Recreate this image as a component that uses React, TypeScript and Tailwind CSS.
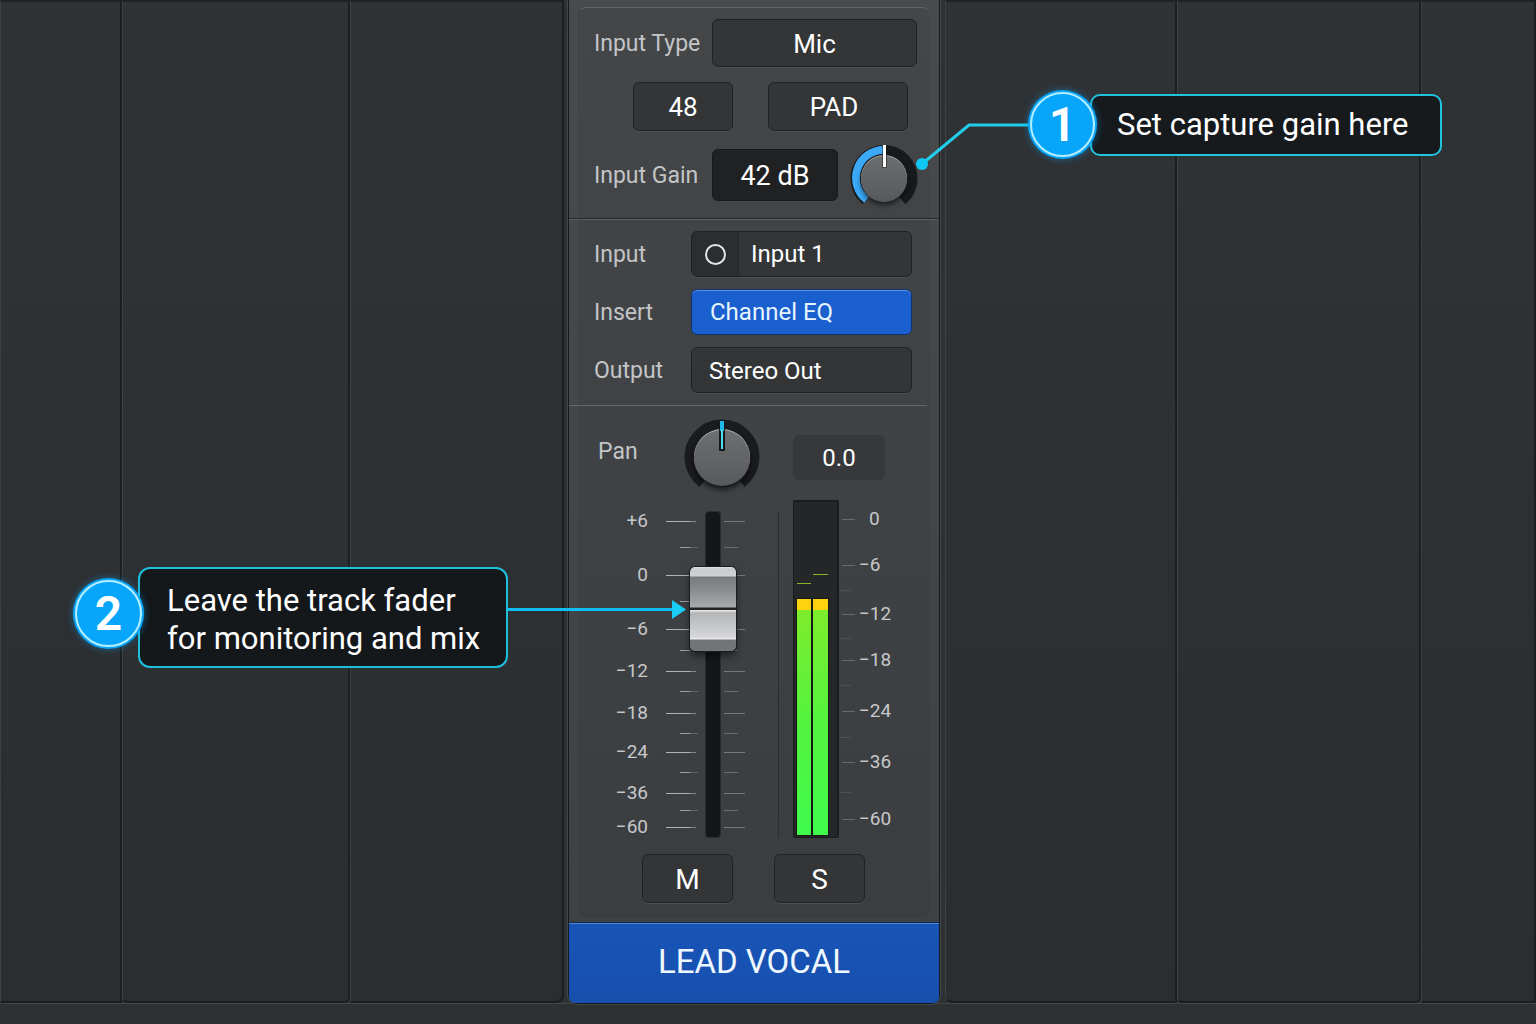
import { useState } from 'react'
import type { ReactNode } from 'react'

const FADER_MARKS = [
  { label: '+6', y: 21 },
  { label: '0', y: 75 },
  { label: '−6', y: 129 },
  { label: '−12', y: 171 },
  { label: '−18', y: 213 },
  { label: '−24', y: 252 },
  { label: '−36', y: 293 },
  { label: '−60', y: 327 },
]
const FADER_MINOR = [47, 101, 150, 191, 233, 272, 310]

const METER_MARKS = [
  { label: '0', y: 19 },
  { label: '−6', y: 65 },
  { label: '−12', y: 114 },
  { label: '−18', y: 160 },
  { label: '−24', y: 211 },
  { label: '−36', y: 262 },
  { label: '−60', y: 319 },
]
const METER_MINOR = [90, 138, 185, 237, 292]

const field =
  'rounded-md border border-[#1f2123] bg-[#333537] text-white shadow-[0_1px_0_#4d5053] outline-none'
const rowLabel = 'pt-0.5 text-[23px] leading-7 text-[#c3c5c7]'

function Knob({ label, size, children }: { label: string; size: string; children: ReactNode }) {
  return (
    <label className={`relative block shrink-0 ${size}`}>
      {children}
      <input
        type="range"
        aria-label={label}
        min={-64}
        max={64}
        defaultValue={0}
        className="absolute inset-0 size-full cursor-pointer opacity-0"
      />
    </label>
  )
}

function GainKnob() {
  return (
    <Knob label="Input gain" size="size-[68px]">
      <svg viewBox="0 0 68 68" className="size-full overflow-visible">
        <defs>
          <linearGradient id="gain-cap" x1="0" y1="0" x2="0" y2="1">
            <stop offset="0" stopColor="#6c6d6f" />
            <stop offset="1" stopColor="#58595b" />
          </linearGradient>
          <filter id="soft" x="-50%" y="-50%" width="200%" height="200%">
            <feGaussianBlur stdDeviation="2.5" />
          </filter>
        </defs>
        <path d="M15.8 56.4 A28.500 28.500 0 1 1 52.2 56.4" fill="none" stroke="#17191b" strokeWidth="10" />
        <path d="M16.6 55.6 A27.800 27.800 0 0 1 34 6" fill="none" stroke="#3ba9f8" strokeWidth="8" />
        <circle cx="34" cy="38" r="23" fill="#000" opacity="0.6" filter="url(#soft)" />
        <circle cx="34" cy="34" r="24" fill="#1b1c1e" />
        <circle cx="34" cy="34" r="23" fill="#a5a6a8" />
        <circle cx="34" cy="35" r="23" fill="url(#gain-cap)" />
        <rect x="32" y="1" width="5" height="23" fill="#1b1c1e" opacity="0.5" />
        <rect x="33" y="1" width="3" height="22" fill="#fff" />
      </svg>
    </Knob>
  )
}

function PanKnob() {
  return (
    <Knob label="Pan" size="size-[74px]">
      <svg viewBox="0 0 74 74" className="size-full overflow-visible">
        <defs>
          <linearGradient id="pan-cap" x1="0" y1="0" x2="0" y2="1">
            <stop offset="0" stopColor="#6e6f71" />
            <stop offset="1" stopColor="#58595b" />
          </linearGradient>
        </defs>
        <path d="M17.5 63 A32.500 32.500 0 1 1 56.5 63" fill="none" stroke="#1a1b1d" strokeWidth="10" />
        <circle cx="37" cy="42" r="28" fill="#000" opacity="0.6" filter="url(#soft)" />
        <circle cx="37" cy="38" r="29" fill="#1a1b1d" />
        <circle cx="37" cy="37" r="28" fill="#b0b1b3" />
        <circle cx="37" cy="38" r="28" fill="url(#pan-cap)" />
        <rect x="34" y="0" width="6" height="31" fill="#15181a" />
        <rect x="35" y="1" width="4" height="10" fill="#1fb9ea" />
        <rect x="36" y="10" width="2" height="19" fill="#4fdcf5" />
      </svg>
    </Knob>
  )
}

/* Every label has zero height, so its centre lies on the mark itself. */
function ScaleLabels({ marks, className }: { marks: { label: string; y: number }[]; className: string }) {
  return (
    <ul className={`flex flex-col text-[19px] text-[#c6c8ca] ${className}`}>
      {marks.map((m, i) => (
        <li
          key={m.label}
          className="flex h-0 items-center justify-end"
          style={{ marginTop: m.y - (i ? marks[i - 1].y : 0) }}
        >
          {m.label}
        </li>
      ))}
    </ul>
  )
}

function Fader() {
  const [level, setLevel] = useState(77)
  return (
    <div className="relative flex w-20 justify-center pt-[11px]">
      <svg viewBox="0 0 80 338" className="absolute inset-0 h-[338px] w-20">
        {FADER_MARKS.map((m) => (
          <g key={m.label}>
            <rect x="0" y={m.y} width="24" height="1" fill="#b0b2b4" />
            <rect x="24" y={m.y} width="6" height="1" fill="#85878a" />
            <rect x="58" y={m.y} width="21" height="1" fill="#75777a" />
          </g>
        ))}
        {FADER_MINOR.map((y) => (
          <g key={y}>
            <rect x="14" y={y} width="10" height="1" fill="#9b9da0" />
            <rect x="24" y={y} width="8" height="1" fill="#63666a" />
            <rect x="58" y={y} width="14" height="1" fill="#6b6e71" />
          </g>
        ))}
      </svg>
      <input
        type="range"
        aria-label="Track fader"
        min={0}
        max={100}
        value={level}
        onChange={(e) => setLevel(Number(e.target.value))}
        className="relative mr-[-13px] h-[327px] w-4 cursor-pointer appearance-none rounded-sm border border-[#2a2c2e] bg-[#151617] [direction:rtl] [writing-mode:vertical-lr] [&::-webkit-slider-thumb]:h-[84px] [&::-webkit-slider-thumb]:w-[46px] [&::-webkit-slider-thumb]:appearance-none [&::-webkit-slider-thumb]:rounded-[5px] [&::-webkit-slider-thumb]:bg-[linear-gradient(#e2e3e4_0,#cbccce_2px,#d0d1d2_9px,#77797a_10px,#8c8d8f_24px,#a9aaab_40px,#222324_41px,#222324_43px,#eeeeef_43px,#b4b5b7_46px,#d6d7d9_70px,#eeeeef_72px,#737476_73px,#737476_84px)] [&::-webkit-slider-thumb]:shadow-[0_0_0_1px_#1b1c1e,0_5px_8px_rgba(0,0,0,0.55)]"
      />
    </div>
  )
}

function Meter() {
  return (
    <svg viewBox="0 0 62 338" className="h-[338px] w-[62px]">
      <defs>
        <linearGradient id="level" x1="0" y1="0" x2="0" y2="1">
          <stop offset="0" stopColor="#7dec2c" />
          <stop offset="0.5" stopColor="#54f33f" />
          <stop offset="1" stopColor="#40fb4c" />
        </linearGradient>
      </defs>
      <rect width="46" height="338" rx="2" fill="#191b1c" />
      <rect x="1" y="2" width="43" height="335" fill="#242627" />
      <rect x="3" y="98" width="33" height="238" fill="#151a14" />
      <rect x="4" y="83" width="14" height="1" fill="#86b52c" />
      <rect x="20" y="74" width="15" height="1" fill="#86b52c" />
      {[4, 20].map((x) => (
        <g key={x}>
          <rect x={x} y="99" width={x === 4 ? 14 : 15} height="11" fill="#fdd20e" />
          <rect x={x} y="110" width={x === 4 ? 14 : 15} height="225" fill="url(#level)" />
        </g>
      ))}
      {METER_MARKS.map((m) => (
        <rect key={m.label} x="49" y={m.y} width="13" height="1" fill="#686b6e" />
      ))}
      {METER_MINOR.map((y) => (
        <rect key={y} x="48" y={y} width="10" height="1" fill="#505356" />
      ))}
    </svg>
  )
}

function Badge({ children, className }: { children: ReactNode; className: string }) {
  return (
    <span
      className={`absolute flex items-center justify-center rounded-full border-2 border-[#b5efff] bg-[#08a6fb] font-semibold text-white shadow-[0_0_0_2px_#08a6fb,0_0_7px_2px_rgba(8,166,251,0.5)] ${className}`}
    >
      {children}
    </span>
  )
}

function ChannelStrip() {
  return (
    <section className="relative z-10 mr-[6px] ml-[5px] flex flex-col self-start rounded-b-lg bg-linear-to-b from-[#484a4c] to-[#3e4144] shadow-[0_0_0_1px_#15191c,0_0_0_2px_#43474a]">
      <div className="pointer-events-none absolute inset-x-[9px] top-[7px] bottom-[85px] rounded-lg border-t border-l border-t-[#626466] border-l-[#404244] bg-black/5" />

      <div className="relative border-b border-[#25282b] pt-[19px] pr-[22px] pb-[17px] pl-[25px]">
        <div className="flex items-center">
          <label htmlFor="input-type" className={`w-[118px] shrink-0 ${rowLabel}`}>
            Input Type
          </label>
          <select
            id="input-type"
            className={`h-12 flex-1 appearance-none pt-0.5 text-center text-[26px] [text-align-last:center] ${field}`}
          >
            <option>Mic</option>
            <option>Line</option>
          </select>
        </div>
        <div className="mt-[15px] flex justify-between pr-[9px] pl-[39px]">
          <button className={`h-[49px] w-[100px] pt-0.5 text-[26px] ${field}`}>48</button>
          <button className={`h-[49px] w-[140px] pt-0.5 pr-2 text-[26px] ${field}`}>PAD</button>
        </div>
        <div className="mt-[18px] flex items-center">
          <label htmlFor="input-gain" className={`w-[118px] shrink-0 ${rowLabel}`}>
            Input Gain
          </label>
          <input
            id="input-gain"
            defaultValue="42 dB"
            className="h-[52px] w-[126px] shrink-0 rounded-md border border-[#17191b] bg-[#1f2123] pt-0.5 text-center text-[27px] text-white outline-none"
          />
          <div className="-mt-[5px] -mb-[11px] ml-3">
            <GainKnob />
          </div>
        </div>
      </div>

      <div className="relative grid grid-cols-[97px_1fr] items-center gap-y-3 border-t border-[#5d6063] pt-[11px] pr-[27px] pb-3 pl-[25px]">
        <label htmlFor="input" className={rowLabel}>
          Input
        </label>
        <div className={`flex h-[46px] overflow-hidden ${field}`}>
          <button
            aria-label="Mono or stereo"
            className="flex w-[47px] items-center justify-center border-r border-[#242628] bg-[#2b2d2f]"
          >
            <span className="size-[21px] rounded-full border-2 border-[#e4e5e6]" />
          </button>
          <select id="input" className="flex-1 appearance-none pl-3 text-2xl outline-none">
            <option>Input 1</option>
            <option>Input 2</option>
          </select>
        </div>
        <span className={rowLabel}>Insert</span>
        <button className="h-[46px] rounded-md border border-[#12326c] bg-[#1a5fce] pl-[18px] text-left text-2xl text-[#e6f4ff] shadow-[inset_0_1px_0_#5b93e6]">
          Channel EQ
        </button>
        <label htmlFor="output" className={rowLabel}>
          Output
        </label>
        <select id="output" className={`h-[46px] appearance-none pt-0.5 pl-[17px] text-2xl ${field}`}>
          <option>Stereo Out</option>
          <option>Bus 1</option>
        </select>
      </div>

      <div className="relative pb-5">
        <div className="mr-3 h-px bg-[#63666a]" />
        <div className="mt-[14px] flex h-[74px] items-center pl-[29px]">
          <label htmlFor="pan" className={`w-[87px] pb-3 ${rowLabel}`}>
            Pan
          </label>
          <PanKnob />
          <input
            id="pan"
            defaultValue="0.0"
            className="ml-[34px] h-[45px] w-[92px] rounded-md bg-[#36383b] pt-0.5 text-center text-2xl text-white outline-none"
          />
        </div>

        <div className="mt-[6px] flex h-[338px] pl-[39px]">
          <ScaleLabels marks={FADER_MARKS} className="mr-[18px] w-10" />
          <Fader />
          <div className="mt-[11px] mr-[14px] ml-8 w-px bg-[#2a2d30]" />
          <Meter />
          <ScaleLabels
            marks={METER_MARKS}
            className="ml-1 w-[34px] [&>li]:justify-start [&>li:first-child]:pl-[10px]"
          />
        </div>

        <div className="mt-4 flex gap-[41px] pl-[73px]">
          <button className={`h-[49px] w-[91px] pt-0.5 text-[28px] ${field}`}>M</button>
          <button className={`h-[49px] w-[91px] pt-0.5 text-[28px] ${field}`}>S</button>
        </div>
      </div>

      <h1 className="relative flex h-20 items-center justify-center rounded-b-md border-t border-[#4f86dc] bg-linear-to-b from-[#1855b7] to-[#174fae] pb-1 text-[33px] text-[#f0f8ff] shadow-[0_-1px_0_#12284d]">
        LEAD VOCAL
      </h1>

      <Callouts />
    </section>
  )
}

/* Notes that float over the mixer, anchored to the channel strip. */
function Callouts() {
  return (
    <>
      <svg viewBox="0 0 120 60" className="pointer-events-none absolute top-[114px] left-[346px] h-[60px] w-[120px]">
        <path d="M7 50 L54 11 H116" fill="none" stroke="#22cdea" strokeWidth="3" />
        <circle cx="7" cy="50" r="6" fill="#0fc8f5" />
      </svg>
      <div className="absolute top-[94px] left-[521px] flex h-[62px] w-[352px] items-center rounded-[10px] border-2 border-[#22c3dd] bg-[#161a1d] pl-[25px] text-[31px] whitespace-nowrap text-white">
        Set capture gain here
        <Badge className="top-[-4px] left-[-62px] size-[65px] text-[48px]">1</Badge>
      </div>

      <svg viewBox="0 0 180 20" className="pointer-events-none absolute top-[600px] left-[-62px] h-5 w-[180px]">
        <path d="M0 9.5 H168" stroke="#10bdf0" strokeWidth="3" />
        <path d="M165 0 L179 9.500 L165 19 Z" fill="#1ccdf7" />
      </svg>
      <div className="absolute top-[567px] left-[-431px] flex h-[101px] w-[370px] items-center rounded-[12px] border-2 border-[#1cc0dc] bg-[#14181b] pt-1 pl-[27px] text-[31px] leading-[38px] whitespace-nowrap text-white">
        <p>
          Leave the track fader
          <br />
          for monitoring and mix
        </p>
        <Badge className="top-[11px] left-[-65px] size-[67px] text-[48px]">2</Badge>
      </div>
    </>
  )
}

function EmptyTrack({ className = '' }: { className?: string }) {
  return (
    <div
      className={`border-t-2 border-r-2 border-b-2 border-l border-t-[#1f2225] border-r-[#1c1f22] border-b-[#1b1e21] border-l-[#3d4144] bg-linear-to-b from-[#303336] to-[#2b2e31] ${className}`}
    />
  )
}

export default function App() {
  return (
    <main className="flex min-h-screen flex-col overflow-hidden bg-[#2e3134] font-[Roboto,'Liberation_Sans',sans-serif]">
      <div className="grid grid-cols-[122fr_228fr_214fr_381px_232fr_244fr_115fr] border-b border-[#43474a]">
        <EmptyTrack />
        <EmptyTrack className="rounded-b-md" />
        <EmptyTrack className="rounded-br-lg" />
        <ChannelStrip />
        <EmptyTrack className="rounded-bl-lg" />
        <EmptyTrack className="rounded-b-md" />
        <EmptyTrack className="border-r-0" />
      </div>
    </main>
  )
}
